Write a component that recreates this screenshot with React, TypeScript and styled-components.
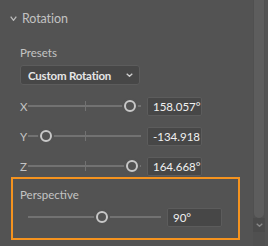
import React from 'react'
import styled, { createGlobalStyle } from 'styled-components'

const Global = createGlobalStyle`
  html, body {
    margin: 0;
    padding: 0;
    background: #535353;
  }
  body {
    font-family: Lato, "Noto Sans", sans-serif;
    -webkit-font-smoothing: antialiased;
  }
`

const Panel = styled.div`
  width: 268px;
  height: 246px;
  overflow: hidden;
  display: flex;
  background: #535353;
`

const Content = styled.div`
  flex: 1;
  display: flex;
  flex-direction: column;
`

const Header = styled.div`
  height: 36px;
  display: flex;
  align-items: center;
  gap: 5px;
  padding-left: 10px;
  color: #c2c2c2;
  font-size: 12.5px;
  letter-spacing: -0.1px;
`

const Body = styled.div`
  display: flex;
  flex-direction: column;
  padding-left: 20px;
`

const Label = styled.div<{ top?: number }>`
  margin-top: ${({ top = 0 }) => top}px;
  height: 14px;
  line-height: 14px;
  font-size: 11.5px;
  color: #c4c4c4;
`

const Dropdown = styled.div`
  margin-top: 5px;
  box-sizing: border-box;
  width: 120px;
  height: 20px;
  display: flex;
  align-items: center;
  justify-content: space-between;
  padding: 0 6px 0 7px;
  background: #474747;
  border: 1px solid #5c5c5c;
  border-radius: 3px;
  color: #e6e6e6;
  font-size: 11.5px;
  font-weight: 700;
  letter-spacing: -0.2px;
`

const Rows = styled.div`
  margin-top: 11px;
  display: flex;
  flex-direction: column;
  gap: 10px;
`

const Row = styled.div<{ indent?: number; top?: number }>`
  display: flex;
  align-items: center;
  height: 20px;
  margin-top: ${({ top = 0 }) => top}px;
  padding-left: ${({ indent = 0 }) => indent}px;
`

const Axis = styled.span`
  width: 8px;
  font-size: 11.5px;
  color: #c4c4c4;
`

const Track = styled.div<{ width: number }>`
  position: relative;
  width: ${({ width }) => width}px;
  height: 20px;
  margin-right: 6px;
  &::before {
    content: '';
    position: absolute;
    left: 0;
    right: 0;
    top: 9px;
    height: 2px;
    background: #727272;
  }
`

const Tick = styled.div`
  position: absolute;
  top: 5px;
  width: 1px;
  height: 10px;
  background: #727272;
`

const Knob = styled.div`
  position: absolute;
  top: 4px;
  box-sizing: border-box;
  width: 12px;
  height: 12px;
  margin-left: -6px;
  border-radius: 50%;
  border: 2px solid #c8c8c8;
  background: #535353;
  box-shadow: 0 0 0 2px #535353;
`

const Value = styled.div`
  box-sizing: border-box;
  width: 55px;
  height: 19px;
  display: flex;
  align-items: center;
  padding-left: 5px;
  background: #474747;
  border: 1px solid #5c5c5c;
  border-radius: 2px;
  color: #f0f0f0;
  font-size: 11.5px;
`

const Focus = styled.div`
  margin: 1px 0 0 11px;
  box-sizing: border-box;
  width: 229px;
  height: 63px;
  border: 2px solid #f5931f;
  padding: 9px 0 0 7px;
  display: flex;
  flex-direction: column;
`

const Scroll = styled.div`
  width: 12px;
  margin-right: 3px;
  display: flex;
  flex-direction: column;
  background: #505050;
`

const Thumb = styled.div`
  margin: 0 1px;
  height: 218px;
  background: #5d5d5d;
  border-radius: 0 0 5px 5px;
`

const ScrollArrow = styled.div`
  height: 14px;
  display: flex;
  align-items: center;
  justify-content: center;
  background: #4b4b4b;
`

function Chevron({ w, h, color }: { w: number; h: number; color: string }) {
  return (
    <svg width={w} height={h} viewBox={`0 0 ${w} ${h}`}>
      <polyline points={`0.7,0.7 ${w / 2},${h - 0.7} ${w - 0.7},0.7`} fill='none' stroke={color} strokeWidth='1.3' />
    </svg>
  )
}

function Slider({ width, at, tick }: { width: number; at: number; tick?: boolean }) {
  return (
    <Track width={width}>
      {tick && <Tick style={{ left: Math.round(width / 2) }} />}
      <Knob style={{ left: at }} />
    </Track>
  )
}

const axes = [
  { name: 'X', at: 102, value: '158.057°' },
  { name: 'Y', at: 18, value: '-134.918' },
  { name: 'Z', at: 104, value: '164.668°' },
]

export default function App() {
  return (
    <Panel>
      <Global />
      <Content>
        <Header>
          <Chevron w={7} h={5} color='#bdbdbd' />
          <span>Rotation</span>
        </Header>
        <Body>
          <Label top={10}>Presets</Label>
          <Dropdown>
            <span>Custom Rotation</span>
            <Chevron w={7} h={4} color='#cfcfcf' />
          </Dropdown>
          <Rows>
            {axes.map((a) => (
              <Row key={a.name}>
                <Axis>{a.name}</Axis>
                <Slider width={113} at={a.at} tick />
                <Value>{a.value}</Value>
              </Row>
            ))}
          </Rows>
        </Body>
        <Focus>
          <Label>Perspective</Label>
          <Row indent={8} top={5}>
            <Slider width={133} at={74} />
            <Value>90°</Value>
          </Row>
        </Focus>
      </Content>
      <Scroll>
        <Thumb />
        <ScrollArrow>
          <Chevron w={7} h={4} color='#888888' />
        </ScrollArrow>
      </Scroll>
    </Panel>
  )
}
